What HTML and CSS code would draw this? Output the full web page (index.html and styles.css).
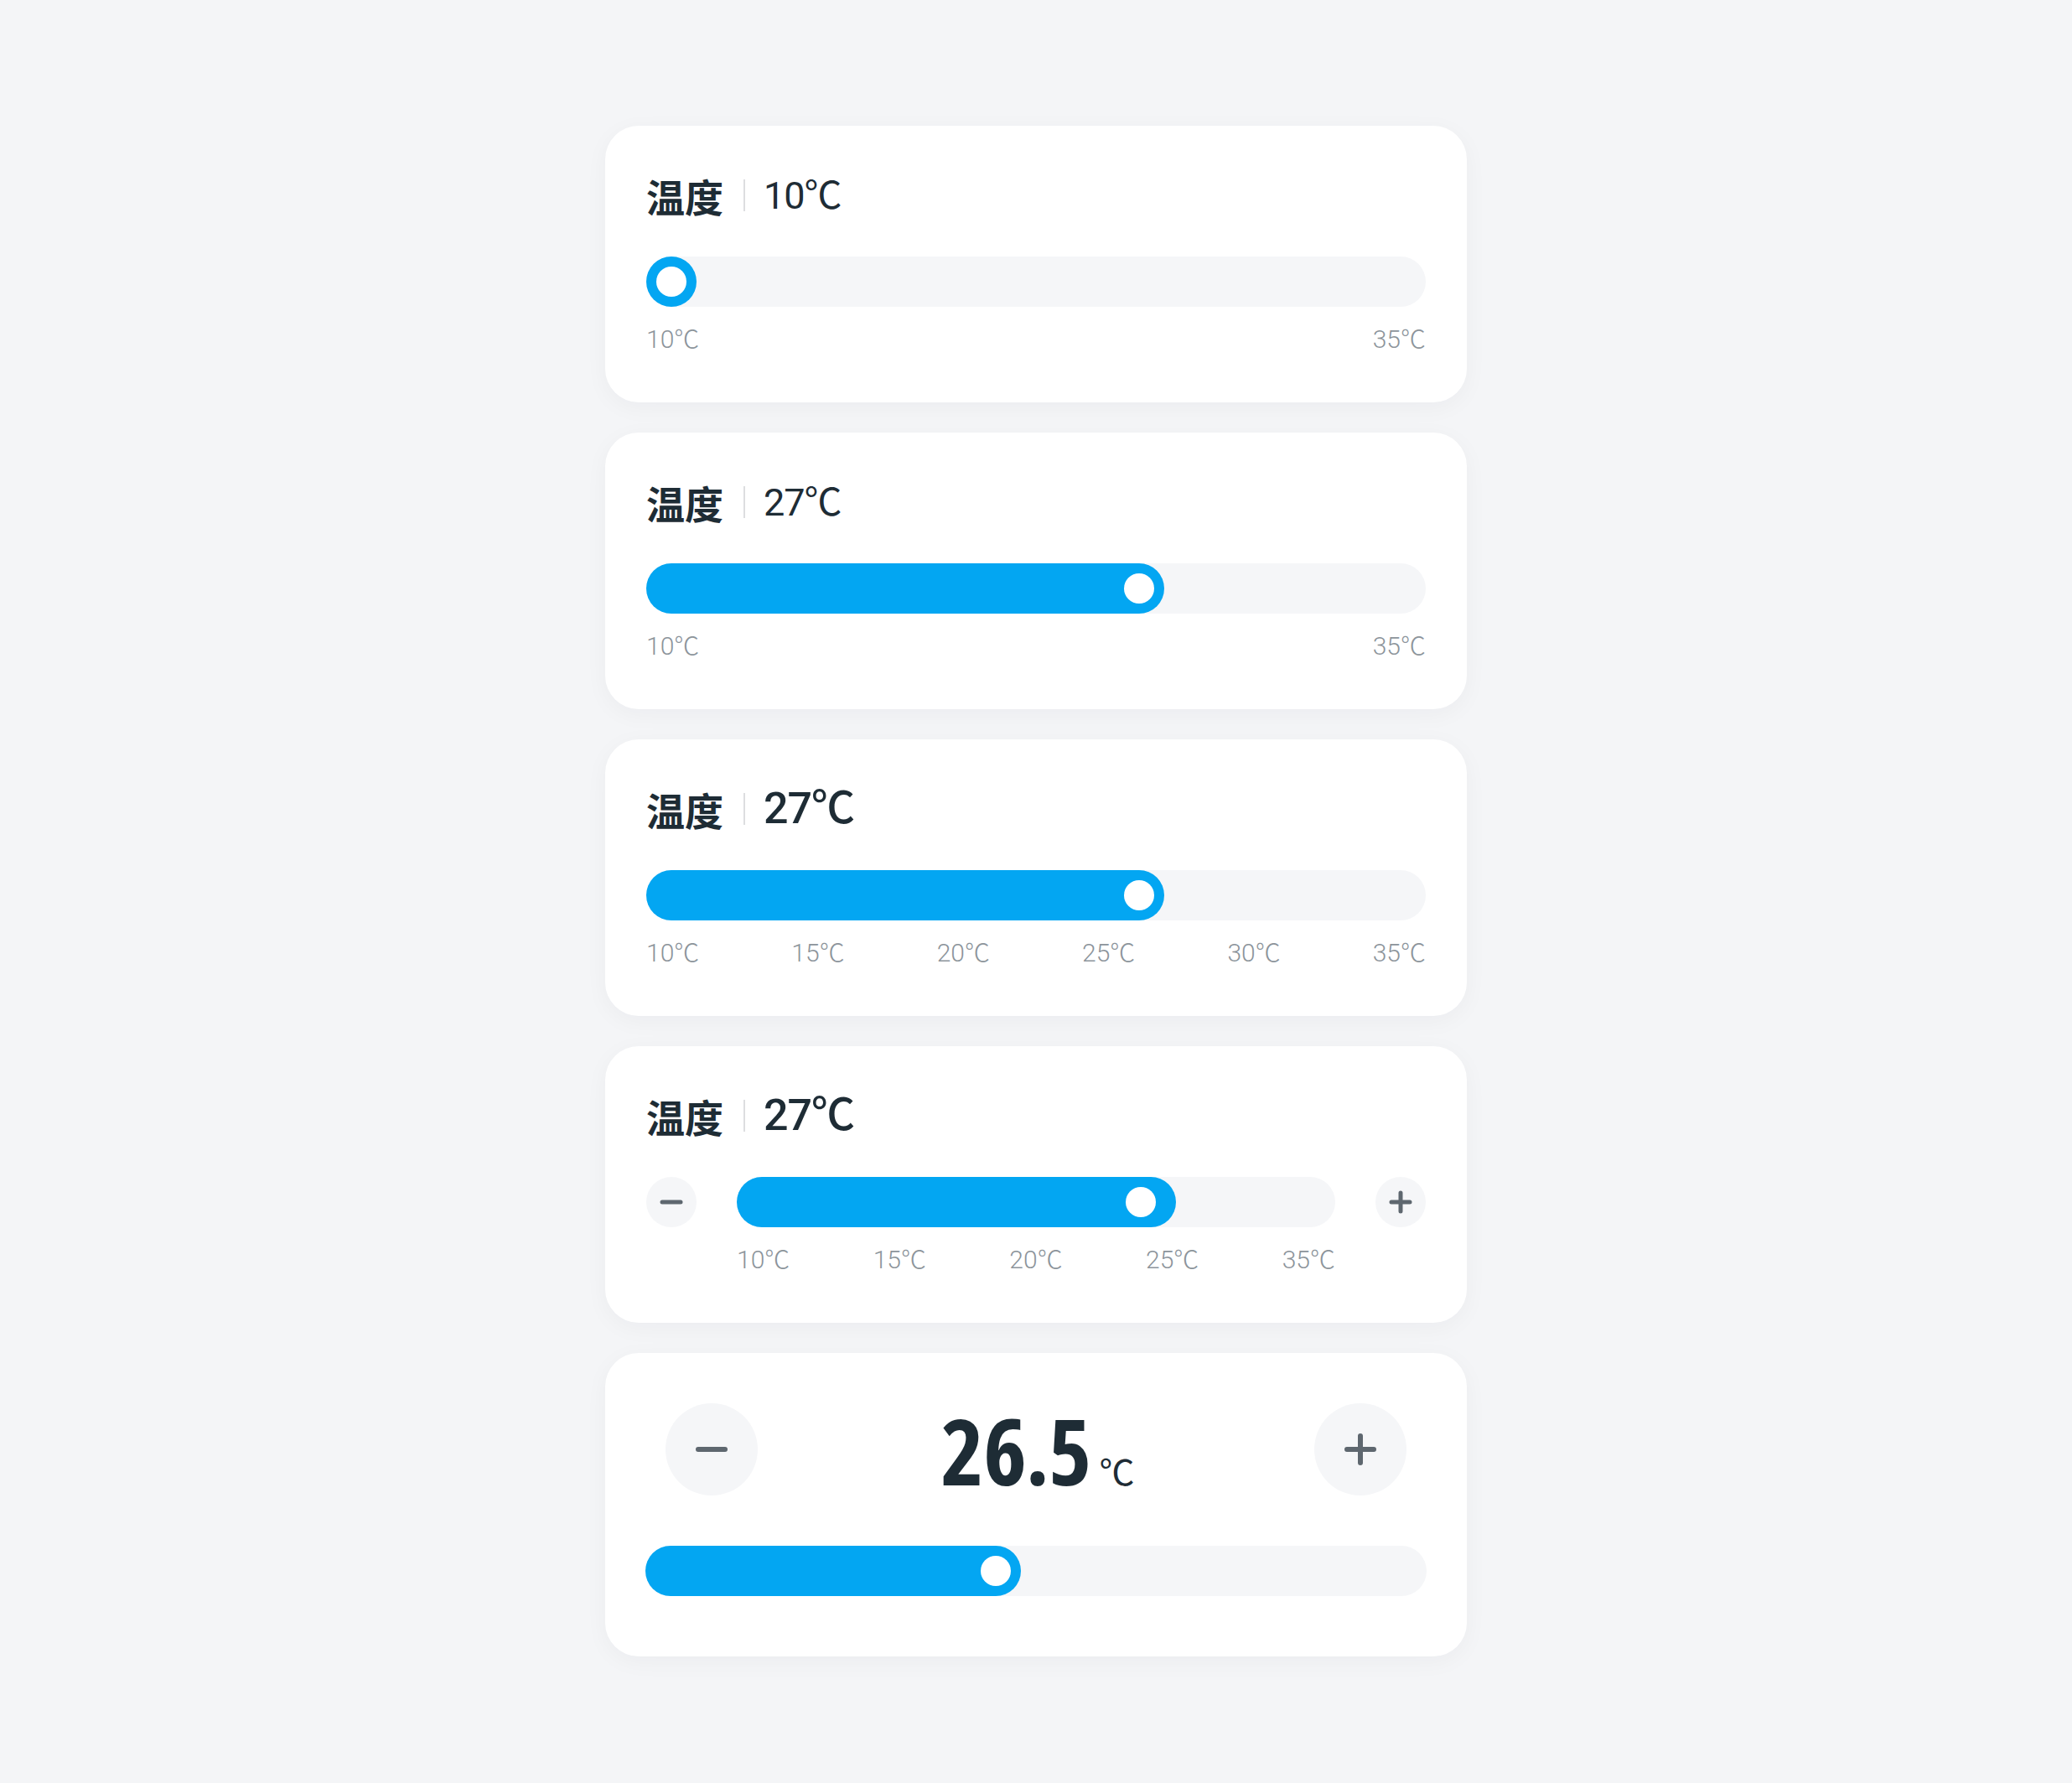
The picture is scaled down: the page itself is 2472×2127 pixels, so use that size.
FILE: index.html
```html
<!DOCTYPE html>
<html lang="zh-CN">
<head>
  <meta charset="UTF-8">
  <meta name="viewport" content="width=device-width, initial-scale=1.0">
  <title>温度滑块</title>
  <link rel="stylesheet" href="styles.css">
</head>
<body>
  <main class="stack">

    <section class="card">
      <div class="card-title">
        <span class="title-label">温度</span>
        <span class="title-sep"></span>
        <span class="title-value">10℃</span>
      </div>
      <div class="track">
        <div class="track-fill" style="width: 0%"><span class="thumb"></span></div>
      </div>
      <div class="scale">
        <span>10℃</span>
        <span>35℃</span>
      </div>
    </section>

    <section class="card">
      <div class="card-title">
        <span class="title-label">温度</span>
        <span class="title-sep"></span>
        <span class="title-value">27℃</span>
      </div>
      <div class="track">
        <div class="track-fill" style="width: 66.4%"><span class="thumb"></span></div>
      </div>
      <div class="scale">
        <span>10℃</span>
        <span>35℃</span>
      </div>
    </section>

    <section class="card">
      <div class="card-title">
        <span class="title-label">温度</span>
        <span class="title-sep"></span>
        <span class="title-value title-value-lg">27℃</span>
      </div>
      <div class="track">
        <div class="track-fill" style="width: 66.4%"><span class="thumb"></span></div>
      </div>
      <div class="scale">
        <span>10℃</span>
        <span>15℃</span>
        <span>20℃</span>
        <span>25℃</span>
        <span>30℃</span>
        <span>35℃</span>
      </div>
    </section>

    <section class="card">
      <div class="card-title">
        <span class="title-label">温度</span>
        <span class="title-sep"></span>
        <span class="title-value title-value-lg">27℃</span>
      </div>
      <div class="slider-row">
        <button class="step-btn" aria-label="减少">
          <svg width="28" height="28" viewBox="0 0 28 28"><path d="M3 14h22" /></svg>
        </button>
        <div class="track">
          <div class="track-fill track-fill-wide" style="width: 73.4%"><span class="thumb"></span></div>
        </div>
        <button class="step-btn" aria-label="增加">
          <svg width="28" height="28" viewBox="0 0 28 28"><path d="M3 14h22M14 3v22" /></svg>
        </button>
      </div>
      <div class="scale scale-inset">
        <span>10℃</span>
        <span>15℃</span>
        <span>20℃</span>
        <span>25℃</span>
        <span>35℃</span>
      </div>
    </section>

    <section class="card stepper-card">
      <div class="stepper-row">
        <button class="step-btn step-btn-lg" aria-label="减少">
          <svg width="40" height="40" viewBox="0 0 40 40"><path d="M4 20h32" /></svg>
        </button>
        <div class="readout">
          <span class="readout-num">26.5</span>
          <span class="readout-unit">℃</span>
        </div>
        <button class="step-btn step-btn-lg" aria-label="增加">
          <svg width="40" height="40" viewBox="0 0 40 40"><path d="M4 20h32M20 4v32" /></svg>
        </button>
      </div>
      <div class="track">
        <div class="track-fill" style="width: 48.1%"><span class="thumb"></span></div>
      </div>
    </section>

  </main>
</body>
</html>
```

FILE: styles.css
```css
body {
  margin: 0;
  background-color: #F4F5F7;
  font-family: Roboto, 'Noto Sans CJK SC', sans-serif;
  color: #1E2C35;
}

.stack {
  width: 1028px;
  margin: 0 auto;
  padding: 150px 0 150px;
  display: flex;
  flex-direction: column;
  gap: 36px;
}

.card {
  background-color: #fff;
  border-radius: 40px;
  padding: 53px 49px 57px;
  box-shadow: 0 6px 28px rgba(20, 30, 50, 0.04);
  box-sizing: border-box;
  height: 330px;
}

.card-title {
  display: flex;
  align-items: center;
  height: 60px;
}

.title-label {
  font-family: 'Noto Sans CJK SC', sans-serif;
  font-size: 46px;
  font-weight: 700;
  line-height: 1;
}

.title-sep {
  width: 2px;
  height: 38px;
  background-color: #DDDEE0;
  margin: 0 22px 0 24px;
}

.title-value {
  font-size: 45px;
  font-weight: 400;
  line-height: 1;
  letter-spacing: -1px;
}

.title-value-lg {
  font-size: 52px;
  font-weight: 500;
}

/* slider track */
.track {
  flex: 1;
  height: 60px;
  border-radius: 30px;
  background-color: #F5F6F8;
  margin-top: 43px;
  display: flex;
}

.track-fill {
  min-width: 60px;
  height: 60px;
  border-radius: 30px;
  background-color: #03A6F2;
  display: flex;
  align-items: center;
  justify-content: flex-end;
  padding-right: 12px;
  box-sizing: border-box;
}

.track-fill-wide {
  padding-right: 24px;
}

.thumb {
  width: 36px;
  height: 36px;
  border-radius: 50%;
  background-color: #fff;
}

.scale {
  display: flex;
  justify-content: space-between;
  margin-top: 19px;
  font-size: 30px;
  font-weight: 300;
  line-height: 40px;
  color: #8C949B;
}

.scale-inset {
  margin-left: 108px;
  margin-right: 108px;
}

/* stepper buttons */
.slider-row {
  display: flex;
  align-items: center;
  gap: 48px;
  margin-top: 43px;
}

.slider-row .track {
  margin-top: 0;
}

.step-btn {
  width: 60px;
  height: 60px;
  border: none;
  border-radius: 50%;
  background-color: #F5F6F8;
  padding: 0;
  display: flex;
  align-items: center;
  justify-content: center;
  flex-shrink: 0;
}

.step-btn svg path {
  stroke: #5E676F;
  stroke-width: 5;
  stroke-linecap: round;
  fill: none;
}

.step-btn-lg {
  width: 110px;
  height: 110px;
}

.step-btn-lg svg path {
  stroke-width: 6;
}

.stepper-card {
  height: 362px;
  padding: 60px 48px 72px;
}

.stepper-row {
  display: flex;
  align-items: center;
  justify-content: space-between;
  padding: 0 24px;
}

.stepper-card .track {
  margin-top: 60px;
}

.readout {
  display: flex;
  align-items: baseline;
  gap: 10px;
  padding-left: 4px;
}

.readout-num {
  font-family: 'Open Sans', sans-serif;
  font-stretch: 75%;
  font-size: 110px;
  font-weight: 700;
  line-height: 1;
  letter-spacing: -1px;
}

.readout-unit {
  font-size: 42px;
  font-weight: 400;
  line-height: 1;
}
```
